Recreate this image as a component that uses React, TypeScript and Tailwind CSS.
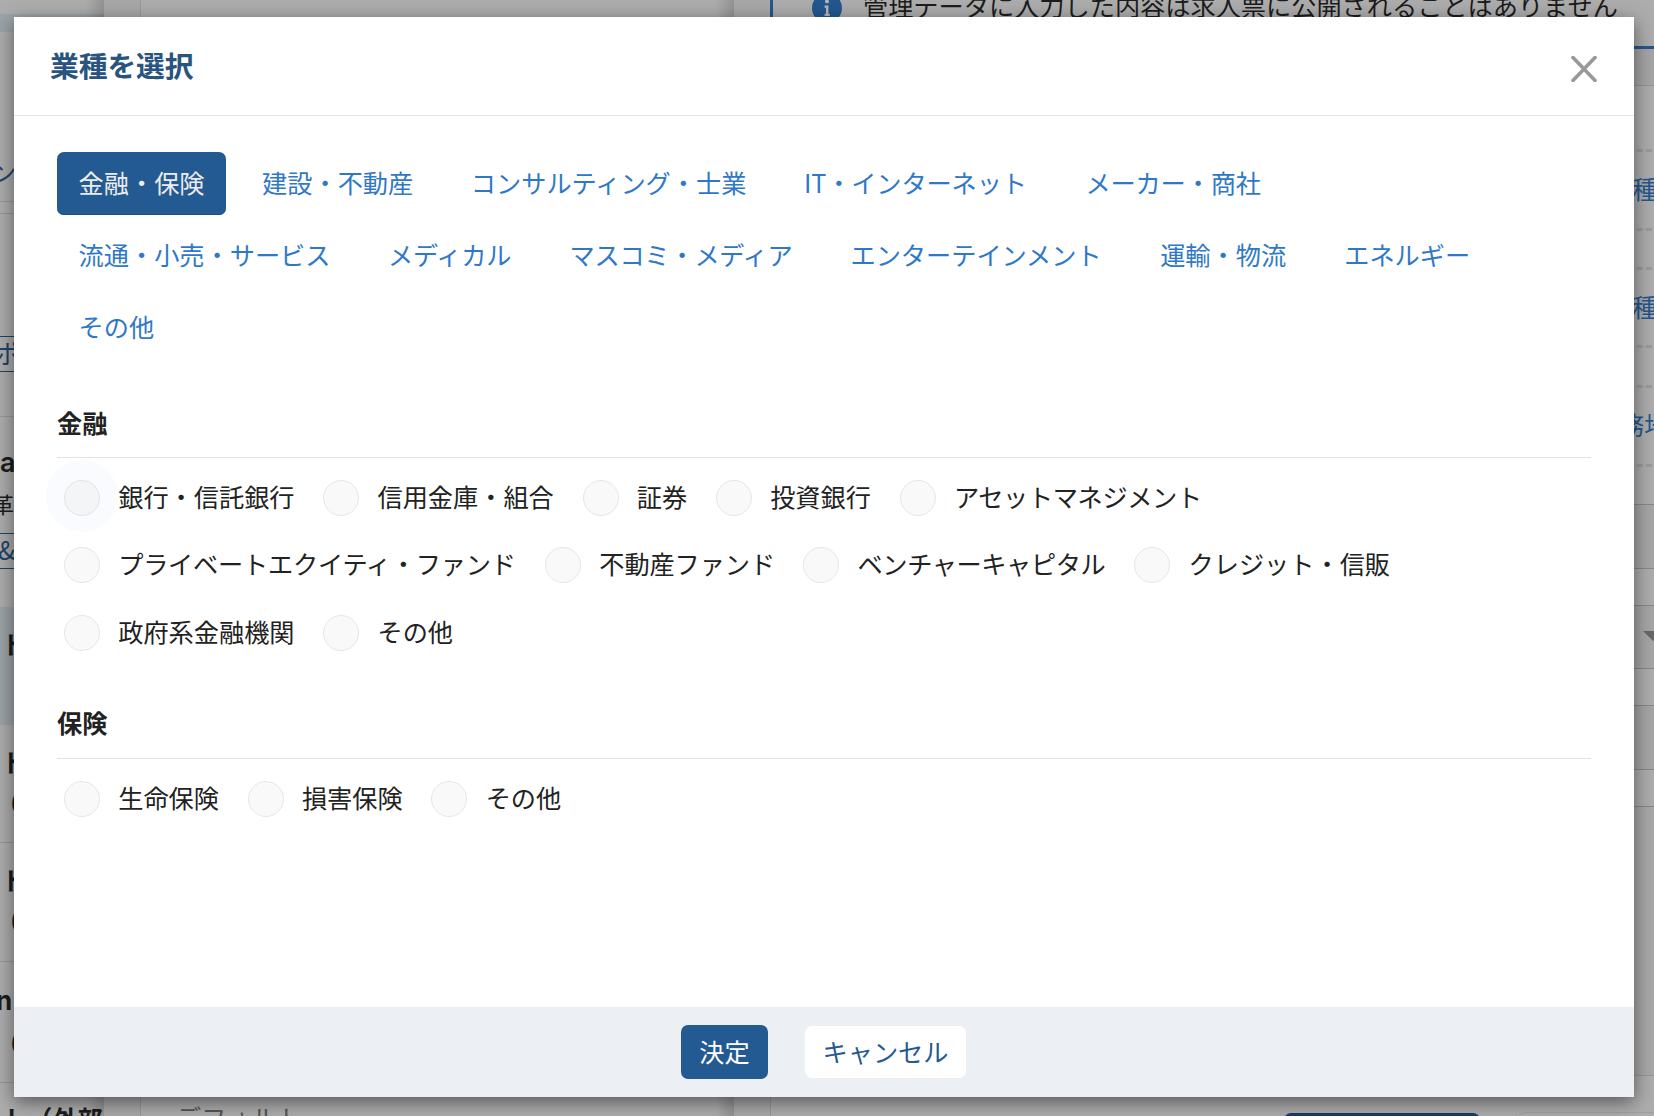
import React from "react";

type Entry = { label: string; w?: string; active?: boolean };

const tabs: Entry[][] = [
  [
    { label: "金融・保険", active: true },
    { label: "建設・不動産" },
    { label: "コンサルティング・士業", w: "w-[274.5px]" },
    { label: "IT・インターネット", w: "w-[225px] tracking-[-0.1px]" },
    { label: "メーカー・商社", w: "w-[175px] tracking-[-0.15px]" },
  ],
  [
    { label: "流通・小売・サービス", w: "w-[251.2px]" },
    { label: "メディカル", w: "w-[124.5px] tracking-[-0.15px]" },
    { label: "マスコミ・メディア", w: "w-[223px] tracking-[-0.2px]" },
    { label: "エンターテインメント", w: "w-[252px]" },
    { label: "運輸・物流", w: "w-[127px]" },
    { label: "エネルギー", w: "w-[126px]" },
  ],
  [{ label: "その他" }],
];

const finance: Entry[][] = [
  [
    { label: "銀行・信託銀行", active: true },
    { label: "信用金庫・組合" },
    { label: "証券" },
    { label: "投資銀行" },
    { label: "アセットマネジメント", w: "w-[250px] tracking-[-0.35px]" },
  ],
  [
    { label: "プライベートエクイティ・ファンド", w: "w-[398.2px] tracking-[-0.22px]" },
    { label: "不動産ファンド", w: "w-[175.2px] tracking-[-0.1px]" },
    { label: "ベンチャーキャピタル", w: "w-[248px] tracking-[-0.38px]" },
    { label: "クレジット・信販" },
  ],
  [{ label: "政府系金融機関" }, { label: "その他" }],
];

const insurance: Entry[][] = [
  [{ label: "生命保険" }, { label: "損害保険" }, { label: "その他" }],
];

function Tab({ label, w = "", active }: Entry) {
  return (
    <button
      className={`h-[63px] rounded-[7px] px-[21.6px] pb-[3px] ${active ? "bg-[#245a92] text-[#ececec] shadow-[inset_0_-1px_0_#1d4f84]" : "text-[#2f78c8]"}`}
    >
      <span className={`block ${w}`}>{label}</span>
    </button>
  );
}

function Radio({ label, w = "", active }: Entry) {
  return (
    <label className="flex h-9 items-center gap-[18.2px]">
      <span
        className={`relative box-border block size-9 rounded-full border ${active ? "border-[#e2e4e6] bg-[#f4f5f7]" : "border-[#e6e6e6] bg-[#f9f9f9]"}`}
      >
        {active && (
          <span className="absolute -left-[19px] -top-[21px] -z-10 size-[72px] rounded-full bg-[#fafbfe]" />
        )}
      </span>
      <span className={`block -translate-y-[2px] ${w}`}>{label}</span>
    </label>
  );
}

function Group({ title, rows }: { title: string; rows: Entry[][] }) {
  return (
    <section className="relative z-0">
      <h3 className="flex h-[67px] items-center border-b border-[#e3e3e3] pb-[5px] font-bold text-[#222]">
        {title}
      </h3>
      <div className="flex flex-col gap-[31.4px] pl-[7px] pt-[22px]">
        {rows.map((row, i) => (
          <div key={i} className="flex gap-[28.8px]">
            {row.map((r) => (
              <Radio key={r.label} {...r} />
            ))}
          </div>
        ))}
      </div>
    </section>
  );
}

function JobRow({ h, bar, selected }: { h: string; bar?: string; selected?: boolean }) {
  return (
    <div
      className={`${h} overflow-hidden border-b ${selected ? "border-transparent bg-[#9ba3a7]" : "border-[#989898]"}`}
    >
      <div
        className={`h-9 font-bold leading-9 text-[#1c1c1c] ${bar === "n" ? "mt-[21px] -ml-[4px] font-['Inter'] text-[26px]" : "ml-[2px] mt-[18px]"}`}
      >
        {bar}
      </div>
      {!selected && (
        <div className="ml-[11px] mt-[5px] h-9 leading-9 text-[#1c1c1c]">0</div>
      )}
    </div>
  );
}

function ListColumn() {
  return (
    <div className="relative w-[104px] shrink-0 overflow-hidden bg-[#adadad]">
      <div className="h-[14px]" />
      <div className="h-[18px] bg-[#9ba4a9]" />
      <div className="h-[170px] overflow-hidden border-b border-[#989898] pt-[121px]">
        <div className="-ml-[9px] h-9 leading-9 text-[#1f4568]">ン</div>
      </div>
      <div className="h-3 border-b border-[#989898]" />
      <div className="h-[203px] overflow-hidden border-b border-[#989898] pt-[122px]">
        <div className="-mx-1 h-9 border border-[#1f4568] leading-[31px] text-[#1f4568]">
          <span className="-ml-[2px]">ポ</span>
        </div>
      </div>
      <div className="h-[190px] overflow-hidden pt-[28px]">
        <div className="h-9 font-['Inter'] text-[27px] font-semibold leading-9 text-[#1c1c1c]">a</div>
        <div className="-ml-[8px] mt-[4px] h-9 text-[22px] leading-9 text-[#1c1c1c]">革</div>
        <div className="-mx-1 mt-[12px] h-9 border border-[#1f4568] leading-[31px] text-[#1f4568]">
          <span className="ml-px">&amp;</span>
        </div>
      </div>
      <JobRow h="h-[118px]" bar="ド" selected />
      <JobRow h="h-[118px]" bar="ド" />
      <JobRow h="h-[119px]" bar="ド" />
      <JobRow h="h-[121px]" bar="n" />
      <div className="ml-[2px] mt-[17px] h-9 whitespace-nowrap font-bold leading-9 text-[#1c1c1c]">
        ト（外部
      </div>
      <div className="absolute inset-y-0 right-0 w-[18px] bg-gradient-to-r from-transparent to-black/15" />
    </div>
  );
}

function DefaultColumn() {
  return (
    <div className="relative flex w-[630px] shrink-0 overflow-hidden bg-[#a8a8a8]">
      <div className="w-[37px] shrink-0 border-r border-[#989898]" />
      <div className="flex flex-1 items-end bg-[#adadad] pl-[35px]">
        <div className="-mb-[19px] h-9 leading-9 text-[#555]">デフォルト</div>
      </div>
      <div className="absolute inset-y-0 right-0 w-[18px] bg-gradient-to-r from-transparent to-black/15" />
    </div>
  );
}

const dashes = ["h-[66px]", "h-[79px]", "h-[39px]", "h-[78px]", "h-[40px]", "h-[79px]"];
const dashText = ["", "種", "", "種", "", "務地"];

function DetailColumn() {
  return (
    <div className="flex flex-1 overflow-hidden bg-[#a8a8a8] pl-[36px]">
      <div className="flex w-[900px] shrink-0 flex-col">
        <div className="flex h-[49px] shrink-0 border-b-[3px] border-l-[3px] border-[#24578f] bg-[#adadad]">
          <svg viewBox="0 0 30 30" className="-mt-[7px] ml-[39px] size-[30px] shrink-0">
            <circle cx="15" cy="15" r="15" fill="#24578f" />
            <circle cx="15" cy="8.4" r="1.9" fill="#b8b8b8" />
            <path d="M12.6 12.6h3.8v8.2h1.4v2.1h-5.2v-2.1h1.4v-6.1h-1.4z" fill="#b8b8b8" />
          </svg>
          <div className="-mt-[13px] ml-[21px] h-9 whitespace-nowrap leading-9 text-[#1c1c1c]">
            管理データに入力した内容は求人票に公開されることはありません
          </div>
        </div>
        <div className="h-[37px] shrink-0 border-b border-[#959595] bg-[#a5a5a5]" />
        <div className="h-[419px] shrink-0 border-b border-[#888] bg-[#adadad]">
          {dashes.map((h, i) => (
            <div
              key={i}
              className={`${h} flex items-center border-b-[3px] border-dashed border-[#9b9b9b] pb-[4px] text-[#24578f]`}
            >
              <span className={i === 5 ? "ml-[849px] whitespace-nowrap" : "ml-[862px]"}>{dashText[i]}</span>
            </div>
          ))}
        </div>
        <div className="h-[64px] shrink-0 border-b border-[#888] bg-[#a6a6a6]" />
        <div className="h-[37px] shrink-0 border-b border-[#888] bg-[#adadad]" />
        <div className="h-[63px] shrink-0 border-b border-[#888] bg-[#a6a6a6] pl-[873px] pt-[25px]">
          <svg viewBox="0 0 20 10" className="h-[10px] w-5">
            <path d="M0 0h20L10 10z" fill="#686868" />
          </svg>
        </div>
        <div className="h-[37px] shrink-0 border-b border-[#888] bg-[#adadad]" />
        <div className="h-[64px] shrink-0 border-b border-[#888] bg-[#a6a6a6]" />
        <div className="h-[37px] shrink-0 border-b border-[#888] bg-[#adadad]" />
        <div className="h-[269px] shrink-0 border-b border-[#989898] bg-[#a8a8a8]" />
        <div className="flex h-[40px] shrink-0 items-start gap-[38px] overflow-hidden border-l border-[#989898] bg-[#adadad] pl-[513px] pt-[36px]">
          <div className="mt-px h-14 w-[196px] shrink-0 rounded-[7px] bg-[#1a3c66]" />
          <div className="h-14 w-[200px] shrink-0 rounded-[7px] border border-[#9aa1aa]" />
        </div>
      </div>
    </div>
  );
}

export default function App() {
  return (
    <div
      lang="ja"
      className="relative h-[1116px] w-[1654px] overflow-hidden font-['Noto_Sans_CJK_JP',sans-serif] text-[25.2px] leading-9"
    >
      <div className="flex h-full" aria-hidden="true">
        <ListColumn />
        <DefaultColumn />
        <DetailColumn />
      </div>

      <div
        role="dialog"
        className="absolute left-[14px] top-[17px] flex h-[1080px] w-[1620px] flex-col bg-white shadow-[0_5px_18px_rgba(0,0,0,0.5)]"
      >
        <header className="flex h-[99px] shrink-0 items-center justify-between border-b border-[#e3e3e3] pl-[36px] pr-[37px]">
          <h2 className="pb-[2px] text-[28.8px] font-bold tracking-[-0.1px] text-[#28547f]">業種を選択</h2>
          <svg viewBox="0 0 26 26" className="mt-[5px] size-[26px]">
            <path d="M2 1.5l22 23M24 1.5L2 24.5" stroke="#999" strokeWidth="3.6" strokeLinecap="round" />
          </svg>
        </header>

        <main className="flex-1 px-[43px] pt-[36px]">
          <nav className="flex flex-col gap-[9px]">
            {tabs.map((row, i) => (
              <div key={i} className="flex gap-[14.4px] whitespace-nowrap">
                {row.map((t) => (
                  <Tab key={t.label} {...t} />
                ))}
              </div>
            ))}
          </nav>
          <div className="mt-[32px] flex flex-col gap-[41.2px] whitespace-nowrap text-[#222]">
            <Group title="金融" rows={finance} />
            <Group title="保険" rows={insurance} />
          </div>
        </main>

        <footer className="flex h-[90px] shrink-0 items-center bg-[#ecf0f4] pl-[667px]">
          <button className="h-[54px] w-[87px] rounded-[7px] bg-[#245a92] pb-[3px] text-white">決定</button>
          <button className="ml-[37px] h-[52px] w-[161px] rounded-[7px] bg-white pb-[3px] text-[#245a92]">
            キャンセル
          </button>
        </footer>
      </div>
    </div>
  );
}
